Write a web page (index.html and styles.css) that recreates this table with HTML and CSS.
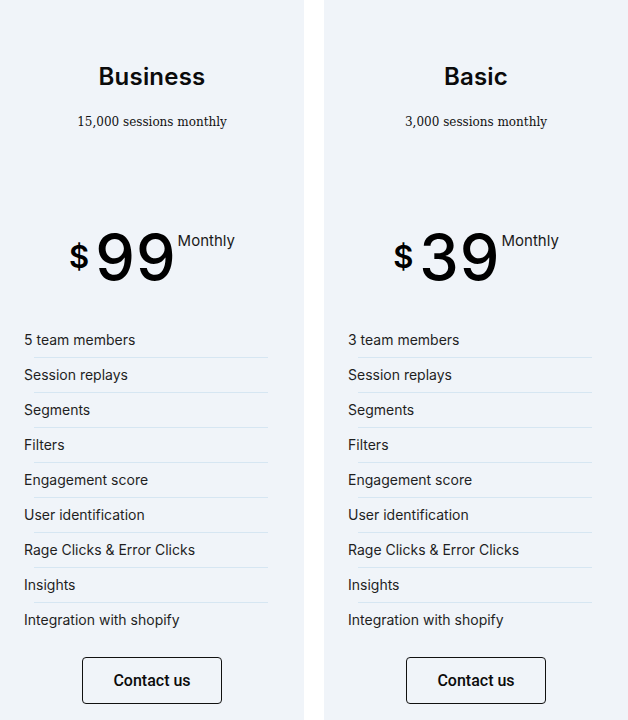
FILE: index.html
```html
<!DOCTYPE html>
<html>
<head>
<meta charset="utf-8">
<link rel="stylesheet" href="styles.css">
</head>
<body>
<div class="plans">
  <div class="card">
    <h2 class="title">Business</h2>
    <p class="sessions">15,000 sessions monthly</p>
    <div class="price"><span class="cur">$</span><span class="amount">99</span><span class="period">Monthly</span></div>
    <ul class="features">
      <li>5 team members</li>
      <li>Session replays</li>
      <li>Segments</li>
      <li>Filters</li>
      <li>Engagement score</li>
      <li>User identification</li>
      <li>Rage Clicks &amp; Error Clicks</li>
      <li>Insights</li>
      <li>Integration with shopify</li>
    </ul>
    <div class="action"><button class="btn">Contact us</button></div>
  </div>
  <div class="card">
    <h2 class="title">Basic</h2>
    <p class="sessions">3,000 sessions monthly</p>
    <div class="price"><span class="cur">$</span><span class="amount">39</span><span class="period">Monthly</span></div>
    <ul class="features">
      <li>3 team members</li>
      <li>Session replays</li>
      <li>Segments</li>
      <li>Filters</li>
      <li>Engagement score</li>
      <li>User identification</li>
      <li>Rage Clicks &amp; Error Clicks</li>
      <li>Insights</li>
      <li>Integration with shopify</li>
    </ul>
    <div class="action"><button class="btn">Contact us</button></div>
  </div>
</div>
</body>
</html>
```
FILE: styles.css
```css
html, body {
  margin: 0;
  padding: 0;
  background: #ffffff;
}
.plans {
  display: flex;
  gap: 20px;
  height: 720px;
}
.card {
  width: 304px;
  background: #f0f4f9;
  display: flex;
  flex-direction: column;
}
.title {
  margin: 62px 0 0;
  text-align: center;
  font-family: "Inter", sans-serif;
  font-weight: 600;
  font-size: 24px;
  line-height: 29px;
  color: #0b0b0b;
  letter-spacing: 0.2px;
}
.sessions {
  margin: 22px 0 0;
  text-align: center;
  font-family: "DejaVu Serif", serif;
  font-size: 12px;
  line-height: 18px;
  color: #111;
}
.price {
  margin: 99px 0 0;
  display: flex;
  justify-content: center;
  align-items: flex-start;
  height: 93px;
}
.cur {
  font-family: "Inter", sans-serif;
  font-size: 31px;
  font-weight: 600;
  line-height: 30px;
  margin-top: 12px;
  margin-right: 6px;
  color: #000;
}
.amount {
  font-family: "Inter", sans-serif;
  font-size: 63px;
  font-weight: 500;
  line-height: 62px;
  margin-top: -4px;
  color: #000;
  letter-spacing: 1px;
}
.period {
  font-family: "Inter", sans-serif;
  font-size: 15px;
  line-height: 18px;
  color: #1a1a1a;
  margin-left: 1px;
  margin-top: 2px;
}
.features {
  list-style: none;
  margin: 0;
  padding: 0 36px 0 34px;
  font-family: "Inter", sans-serif;
  font-size: 14px;
  color: #1f1f1f;
}
.features li {
  box-sizing: border-box;
  height: 35px;
  line-height: 34px;
  border-bottom: 1px solid #d6e6f2;
  text-indent: -10px;
}
.features li:last-child {
  border-bottom: none;
}
.action {
  display: flex;
  justify-content: center;
  margin-top: 19px;
}
.btn {
  width: 140px;
  height: 47px;
  border: 1px solid #111;
  border-radius: 4px;
  background: transparent;
  font-family: "Roboto", sans-serif;
  font-weight: 500;
  font-size: 16px;
  color: #0b0b0b;
}
```
